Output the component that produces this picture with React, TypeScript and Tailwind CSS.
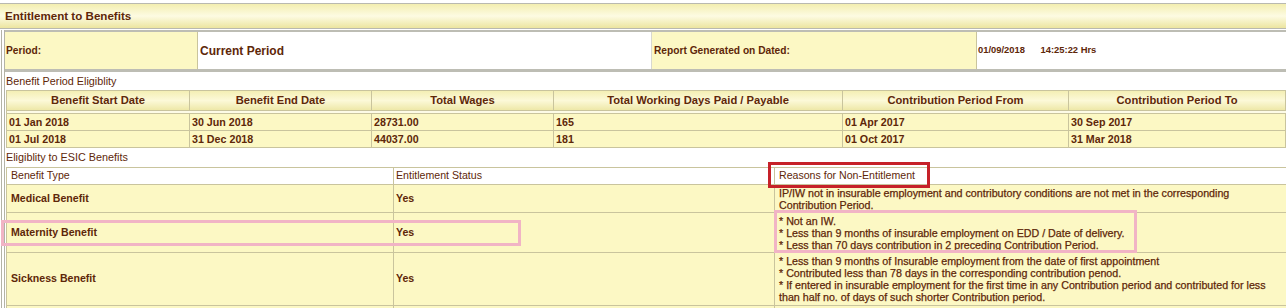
import React from 'react';

const line = 'border-[#c9c49d]';

const periodRows = [
  ['01 Jan 2018', '30 Jun 2018', '28731.00', '165', '01 Apr 2017', '30 Sep 2017'],
  ['01 Jul 2018', '31 Dec 2018', '44037.00', '181', '01 Oct 2017', '31 Mar 2018'],
];

const headers = [
  'Benefit Start Date',
  'Benefit End Date',
  'Total Wages',
  'Total Working Days Paid / Payable',
  'Contribution Period From',
  'Contribution Period To',
];

const benefits = [
  {
    type: 'Medical Benefit',
    status: 'Yes',
    h: 'h-[28px]',
    reasons: [
      'IP/IW not in insurable employment and contributory conditions are not met in the corresponding Contribution Period.',
    ],
  },
  {
    type: 'Maternity Benefit',
    status: 'Yes',
    h: 'h-[40px]',
    reasons: [
      '* Not an IW.',
      '* Less than 9 months of insurable employment on EDD / Date of delivery.',
      '* Less than 70 days contribution in 2 preceding Contribution Period.',
    ],
  },
  {
    type: 'Sickness Benefit',
    status: 'Yes',
    h: 'h-[53px]',
    reasons: [
      '* Less than 9 months of Insurable employment from the date of first appointment',
      '* Contributed less than 78 days in the corresponding contribution penod.',
      '* If entered in insurable employment for the first time in any Contribution period and contributed for less than half no. of days of such shorter Contribution period.',
    ],
  },
  { type: '', status: '', h: 'h-[20px]', reasons: [] },
];

const cols1 = 'grid grid-cols-[183px_182px_182px_289px_226px_1fr]';
const cols2 = 'grid grid-cols-[387px_381px_1fr]';

export default function App() {
  return (
    <div className="relative w-[1286px] h-[308px] overflow-hidden bg-white pt-[3px] font-['Liberation_Sans',Arial,sans-serif] text-[#5e2709]">
      {/* title bar */}
      <div className="flex h-[26px] items-center border-y border-[#b9b9b0] bg-gradient-to-b from-[#f3eeb0] via-[#fdfbe2] to-[#ece5a0] pl-[5px] text-[11.6px] font-bold">
        Entitlement to Benefits
      </div>

      <div className="mt-[1px] border-l-4 border-double border-[#b3b3a6] ml-[1px]">
        {/* period row */}
        <div className="flex h-[42px] border-t-2 border-b-[3px] border-[#bdbdb4] text-[10.2px] font-bold">
          <div className={`flex w-[193px] items-center border-r ${line} bg-[#fcf8c4] pl-[1px]`}>Period:</div>
          <div className="flex w-[454px] items-center border-r border-[#d8d8d0] pl-[2px] text-[12px]">
            Current Period
          </div>
          <div className={`flex w-[325px] items-center border-r ${line} bg-[#fcf8c4] pl-[2px]`}>
            Report Generated on Dated:
          </div>
          <div className="flex flex-1 items-center pl-[1px] text-[9.4px] whitespace-pre">
            {'01/09/2018      14:25:22 Hrs'}
          </div>
        </div>

        <div className="flex h-[18px] items-center pl-[1px] text-[10.8px]">Benefit Period Eligiblity</div>

        {/* benefit period table */}
        <div className={`ml-[1px] border-l ${line}`}>
          <div className={`${cols1} h-[21px] border-y ${line} bg-gradient-to-b from-[#f4efb4] via-[#fcf9d8] to-[#eee8a8] text-[11.2px] font-bold`}>
            {headers.map((h) => (
              <div key={h} className={`flex items-center justify-center border-r ${line}`}>
                {h}
              </div>
            ))}
          </div>
          <div className={`h-[3px] border-b ${line} bg-[#fdfbe6]`} />
          {periodRows.map((r) => (
            <div key={r[0]} className={`${cols1} h-[17px] border-b ${line} bg-[#fcf8c4] text-[10.7px] font-bold`}>
              {r.map((c, i) => (
                <div key={i} className={`flex items-center border-r ${line} pl-[2px]`}>
                  {c}
                </div>
              ))}
            </div>
          ))}
        </div>

        <div className="flex h-[19px] items-center pl-[1px] text-[10.8px]">Eligiblity to ESIC Benefits</div>

        {/* eligibility table */}
        <div className={`ml-[1px] border-l ${line}`}>
          <div className={`${cols2} h-[18px] border-y ${line} text-[10.6px]`}>
            <div className={`flex items-center border-r ${line} pl-[4px]`}>Benefit Type</div>
            <div className={`flex items-center border-r ${line} pl-[2px]`}>Entitlement Status</div>
            <div className="flex items-center pl-[4px]">Reasons for Non-Entitlement</div>
          </div>
          {benefits.map((b, k) => (
            <div key={k} className={`${cols2} ${b.h} border-b ${line} bg-[#fcf8c4]`}>
              <div className={`flex items-center border-r ${line} pl-[4px] text-[10.6px] font-bold`}>{b.type}</div>
              <div className={`flex items-center border-r ${line} pl-[2px] text-[10.6px] font-bold`}>{b.status}</div>
              <div className="flex flex-col justify-center overflow-hidden pl-[4px] pr-[2px] text-[10.7px] leading-[12px] [-webkit-text-stroke:0.25px_currentColor]">
                {b.reasons.map((t) => (
                  <div key={t}>{t}</div>
                ))}
              </div>
            </div>
          ))}
        </div>
      </div>

      {/* annotation boxes */}
      <div className="pointer-events-none absolute left-[768px] top-[162px] h-[26px] w-[162px] border-[3px] border-[#c62129]" />
      <div className="pointer-events-none absolute left-[1px] top-[220px] h-[26px] w-[520px] border-[3px] border-[#f1b4c5]" />
      <div className="pointer-events-none absolute left-[774px] top-[210px] h-[43px] w-[363px] border-[3px] border-[#f1b4c5]" />
    </div>
  );
}
